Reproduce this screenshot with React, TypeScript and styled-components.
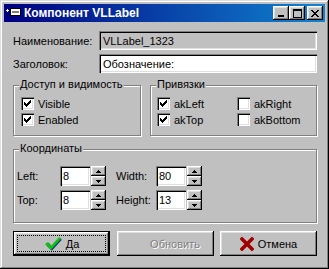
import React from "react";
import styled, { createGlobalStyle } from "styled-components";

const Global = createGlobalStyle`
  html, body { margin: 0; padding: 0; background: #c0c0c0; }
  body { font-family: "Liberation Sans", Arial, sans-serif; font-size: 11px; color: #000; }
  #root { width: 329px; height: 269px; }
`;

const raised = `box-shadow: inset -1px -1px #000, inset 1px 1px #fff, inset -2px -2px #808080, inset 2px 2px #dfdfdf;`;
const sunken = `box-shadow: inset 1px 1px #808080, inset 2px 2px #000, inset -1px -1px #fff, inset -2px -2px #dfdfdf;`;

const Window = styled.div`
  width: 329px;
  height: 269px;
  box-sizing: border-box;
  padding: 4px;
  background: #c0c0c0;
  box-shadow: inset -1px -1px #000, inset 1px 1px #dfdfdf, inset -2px -2px #808080, inset 2px 2px #fff;
  display: flex;
  flex-direction: column;
`;

const TitleBar = styled.div`
  height: 18px;
  flex: none;
  display: flex;
  align-items: center;
  padding: 0 2px 0 1px;
  background: linear-gradient(90deg, #000080 0%, #1084d0 100%);
`;

const TitleText = styled.span`
  margin-left: 3px;
  flex: 1;
  color: #fff;
  font-weight: bold;
  font-size: 12px;
  white-space: nowrap;
`;

const CaptionButton = styled.div<{ $gap?: number }>`
  width: 16px;
  height: 14px;
  box-sizing: border-box;
  background: #c0c0c0;
  margin-left: ${(p) => p.$gap ?? 0}px;
  ${raised}
  display: flex;
  align-items: center;
  justify-content: center;
`;

const Body = styled.div`
  flex: 1;
  display: flex;
  flex-direction: column;
  padding: 9px 8px 0 9px;
`;

const FieldRow = styled.div<{ $mt?: number }>`
  display: flex;
  align-items: center;
  height: 19px;
  margin-top: ${(p) => p.$mt ?? 0}px;
`;

const FieldLabel = styled.span<{ $w: number }>`
  width: ${(p) => p.$w}px;
  flex: none;
  white-space: nowrap;
`;

const TextField = styled.div<{ $readOnly?: boolean }>`
  flex: 1;
  height: 19px;
  box-sizing: border-box;
  padding: 0 2px 0 4px;
  display: flex;
  align-items: center;
  background: ${(p) => (p.$readOnly ? "#c0c0c0" : "#fff")};
  ${sunken}
`;

const GroupsRow = styled.div`
  display: flex;
  gap: 9px;
  margin-top: 12px;
`;

const Group = styled.div<{ $w: number; $h: number; $mt?: number }>`
  position: relative;
  box-sizing: border-box;
  width: ${(p) => p.$w}px;
  height: ${(p) => p.$h}px;
  margin-top: ${(p) => p.$mt ?? 0}px;
  border: 1px solid #808080;
  box-shadow: inset 1px 1px #fff, 1px 1px #fff;
`;

const Legend = styled.span`
  position: absolute;
  top: -8px;
  left: 5px;
  padding: 0 1px;
  line-height: 13px;
  background: #c0c0c0;
  white-space: nowrap;
`;

const CheckList = styled.div`
  display: flex;
  flex-direction: column;
  gap: 3px;
  padding: 11px 0 0 7px;
`;

const CheckGrid = styled.div`
  display: grid;
  grid-template-columns: 80px 1fr;
  row-gap: 3px;
  padding: 11px 0 0 6px;
`;

const CheckRow = styled.label`
  display: flex;
  align-items: center;
  gap: 4px;
  height: 13px;
  white-space: nowrap;
`;

const CheckBox = styled.span`
  width: 13px;
  height: 13px;
  box-sizing: border-box;
  flex: none;
  background: #fff;
  ${sunken}
  display: flex;
  align-items: center;
  justify-content: center;
`;

const CoordRows = styled.div`
  display: flex;
  flex-direction: column;
  gap: 4px;
  padding: 16px 0 0 3px;
`;

const CoordRow = styled.div`
  display: flex;
  align-items: center;
  height: 20px;
`;

const SpinEdit = styled.div<{ $mr?: number }>`
  display: flex;
  gap: 1px;
  margin-right: ${(p) => p.$mr ?? 0}px;
`;

const SpinText = styled.div`
  width: 30px;
  height: 20px;
  box-sizing: border-box;
  padding: 0 2px 0 3px;
  display: flex;
  align-items: center;
  background: #fff;
  ${sunken}
`;

const SpinButtons = styled.div`
  display: flex;
  flex-direction: column;
`;

const SpinButton = styled.div`
  width: 15px;
  height: 10px;
  box-sizing: border-box;
  background: #c0c0c0;
  ${raised}
  display: flex;
  align-items: center;
  justify-content: center;
`;

const ButtonRow = styled.div`
  display: flex;
  justify-content: space-between;
  margin-top: 8px;
`;

const Button = styled.div<{ $default?: boolean; $disabled?: boolean }>`
  position: relative;
  width: 97px;
  height: 25px;
  box-sizing: border-box;
  background: #c0c0c0;
  display: flex;
  align-items: center;
  justify-content: center;
  gap: 4px;
  color: ${(p) => (p.$disabled ? "#808080" : "#000")};
  text-shadow: ${(p) => (p.$disabled ? "1px 1px 0 #fff" : "none")};
  ${(p) =>
    p.$default
      ? `border: 1px solid #000; box-shadow: inset -1px -1px #000, inset 1px 1px #fff, inset -2px -2px #808080, inset 2px 2px #dfdfdf;`
      : raised}
`;

const FocusRect = styled.span`
  position: absolute;
  inset: 3px;
  border: 1px dotted #000;
  pointer-events: none;
`;

const GlyphSpace = styled.span`
  width: 16px;
  height: 16px;
`;

const Check = () => (
  <svg width="7" height="7" viewBox="0 0 7 7" shapeRendering="crispEdges">
    <path
      d="M6 0h1v3h-1zM5 1h1v3h-1zM4 2h1v3h-1zM3 3h1v3h-1zM2 4h1v3h-1zM1 3h1v3h-1zM0 2h1v3h-1z"
      fill="#000"
    />
  </svg>
);

const CheckItem = ({ label, checked }: { label: string; checked: boolean }) => (
  <CheckRow>
    <CheckBox>{checked && <Check />}</CheckBox>
    {label}
  </CheckRow>
);

const Arrow = ({ up }: { up: boolean }) => (
  <svg width="5" height="3" viewBox="0 0 5 3" shapeRendering="crispEdges">
    {up ? (
      <path d="M2 0h1v1h-1zM1 1h3v1h-3zM0 2h5v1h-5z" fill="#000" />
    ) : (
      <path d="M0 0h5v1h-5zM1 1h3v1h-3zM2 2h1v1h-1z" fill="#000" />
    )}
  </svg>
);

const Spin = ({ value, mr }: { value: string; mr?: number }) => (
  <SpinEdit $mr={mr}>
    <SpinText>{value}</SpinText>
    <SpinButtons>
      <SpinButton>
        <Arrow up />
      </SpinButton>
      <SpinButton>
        <Arrow up={false} />
      </SpinButton>
    </SpinButtons>
  </SpinEdit>
);

const AppIcon = () => (
  <svg width="16" height="16" viewBox="0 0 16 16" shapeRendering="crispEdges">
    <path d="M2 4h1v1h-1zM1 5h3v1h-3zM2 6h1v1h-1z" fill="#fff" />
    <rect x="5" y="3" width="11" height="8" fill="#000" />
    <rect x="6" y="4" width="9" height="6" fill="#fff" />
    <rect x="7" y="6" width="7" height="2" fill="#808080" />
  </svg>
);

const MinGlyph = () => (
  <svg width="8" height="7" viewBox="0 0 8 7" shapeRendering="crispEdges">
    <rect x="1" y="5" width="6" height="2" fill="#000" />
  </svg>
);

const MaxGlyph = () => (
  <svg width="9" height="9" viewBox="0 0 9 9" shapeRendering="crispEdges">
    <path d="M0 0h9v2h-9zM0 0h1v9h-1zM8 0h1v9h-1zM0 8h9v1h-9z" fill="#000" />
  </svg>
);

const CloseGlyph = () => (
  <svg width="8" height="7" viewBox="0 0 8 7" shapeRendering="crispEdges">
    <path
      d="M0 0h2v1h-2zM6 0h2v1h-2zM1 1h2v1h-2zM5 1h2v1h-2zM2 2h4v1h-4zM3 3h2v1h-2zM2 4h4v1h-4zM1 5h2v1h-2zM5 5h2v1h-2zM0 6h2v1h-2zM6 6h2v1h-2z"
      fill="#000"
    />
  </svg>
);

const GreenCheck = () => (
  <svg width="18" height="15" viewBox="0 0 18 15">
    <path d="M1 8 L4 6 L7 10 L15 1 L17 3 L7 14 Z" fill="#003080" transform="translate(0.8,0.8)" />
    <path d="M1 8 L4 6 L7 10 L15 1 L17 3 L7 14 Z" fill="#10c010" />
  </svg>
);

const RedX = () => (
  <svg width="14" height="14" viewBox="0 0 14 14">
    <path d="M2 2 L12 12 M12 2 L2 12" stroke="#a00000" strokeWidth="3.6" strokeLinecap="square" />
  </svg>
);

export default function App() {
  return (
    <>
      <Global />
      <Window>
        <TitleBar>
          <AppIcon />
          <TitleText>Компонент VLLabel</TitleText>
          <CaptionButton>
            <MinGlyph />
          </CaptionButton>
          <CaptionButton>
            <MaxGlyph />
          </CaptionButton>
          <CaptionButton $gap={2}>
            <CloseGlyph />
          </CaptionButton>
        </TitleBar>
        <Body>
          <FieldRow>
            <FieldLabel $w={86}>Наименование:</FieldLabel>
            <TextField $readOnly>VLLabel_1323</TextField>
          </FieldRow>
          <FieldRow $mt={4}>
            <FieldLabel $w={86}>Заголовок:</FieldLabel>
            <TextField>Обозначение:</TextField>
          </FieldRow>
          <GroupsRow>
            <Group $w={128} $h={51}>
              <Legend>Доступ и видимость</Legend>
              <CheckList>
                <CheckItem label="Visible" checked />
                <CheckItem label="Enabled" checked />
              </CheckList>
            </Group>
            <Group $w={167} $h={51}>
              <Legend>Привязки</Legend>
              <CheckGrid>
                <CheckItem label="akLeft" checked />
                <CheckItem label="akRight" checked={false} />
                <CheckItem label="akTop" checked />
                <CheckItem label="akBottom" checked={false} />
              </CheckGrid>
            </Group>
          </GroupsRow>
          <Group $w={304} $h={74} $mt={13}>
            <Legend>Координаты</Legend>
            <CoordRows>
              <CoordRow>
                <FieldLabel $w={43}>Left:</FieldLabel>
                <Spin value="8" mr={10} />
                <FieldLabel $w={40}>Width:</FieldLabel>
                <Spin value="80" />
              </CoordRow>
              <CoordRow>
                <FieldLabel $w={43}>Top:</FieldLabel>
                <Spin value="8" mr={10} />
                <FieldLabel $w={40}>Height:</FieldLabel>
                <Spin value="13" />
              </CoordRow>
            </CoordRows>
          </Group>
          <ButtonRow>
            <Button $default>
              <FocusRect />
              <GreenCheck />
              Да
            </Button>
            <Button $disabled>
              <GlyphSpace />
              Обновить
            </Button>
            <Button>
              <RedX />
              Отмена
            </Button>
          </ButtonRow>
        </Body>
      </Window>
    </>
  );
}
